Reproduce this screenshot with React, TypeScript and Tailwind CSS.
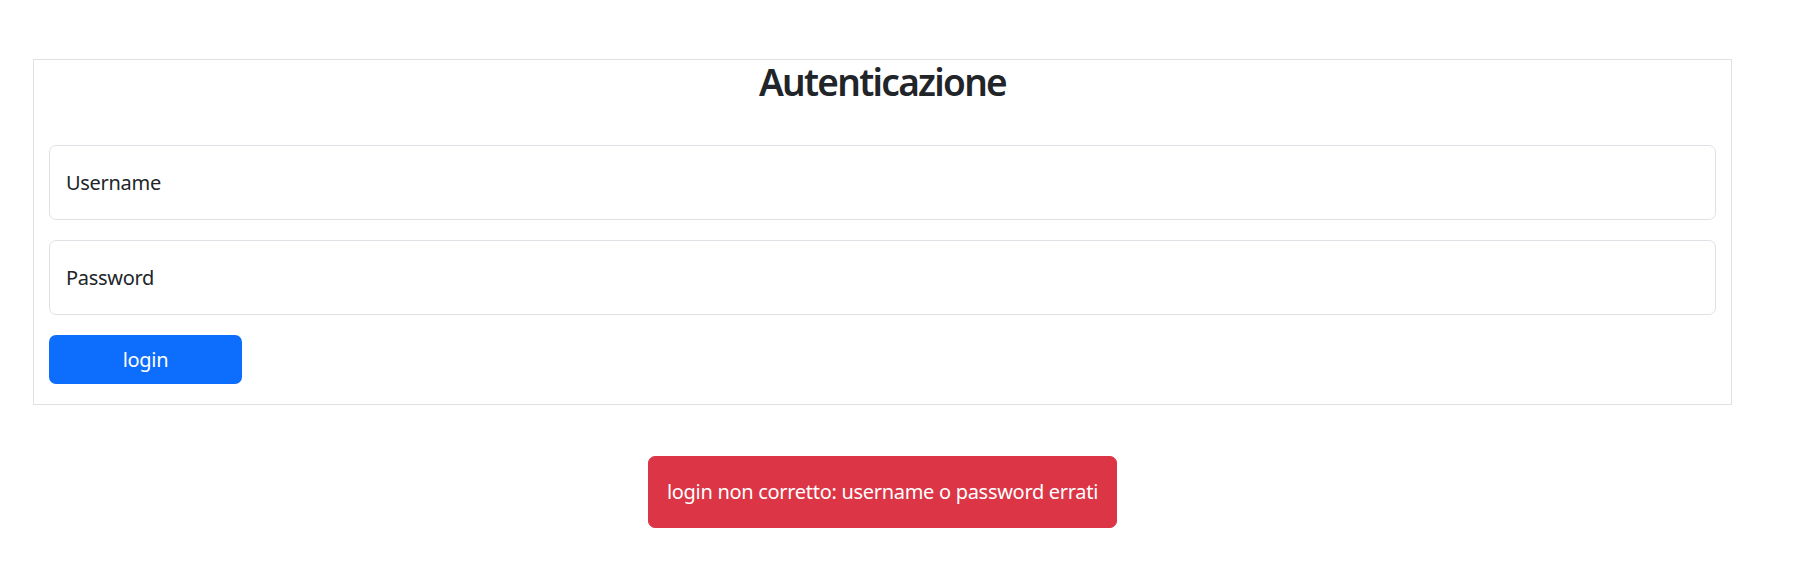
import React from "react";

export default function App() {
  return (
    <div className="min-h-[583px] bg-white pt-[59px] font-['Noto_Sans',sans-serif] text-[20px] tracking-[-0.3px] text-[#212529]">
      <div className="ml-[33px] w-[1699px]">
        {/* Login card */}
        <div className="border border-[#dee2e6] px-[15px] pb-[20px]">
          <h2 className="text-center text-[37px] font-semibold leading-[44px] tracking-[-1.7px]">
            Autenticazione
          </h2>

          <form className="mt-[41px] flex flex-col gap-[20px]">
            <input
              type="text"
              placeholder="Username"
              className="h-[75px] w-full rounded-[7px] border border-[#dee2e6] px-[16px] outline-none placeholder:text-[#212529]"
            />
            <input
              type="password"
              placeholder="Password"
              className="h-[75px] w-full rounded-[7px] border border-[#dee2e6] px-[16px] outline-none placeholder:text-[#212529]"
            />
            <button
              type="button"
              className="h-[49px] w-[193px] rounded-[7px] bg-[#0d6efd] text-white"
            >
              login
            </button>
          </form>
        </div>

        {/* Error alert */}
        <div className="mt-[51px] flex justify-center">
          <div className="flex h-[72px] w-[469px] items-center justify-center rounded-[7px] border border-[#dc3545] bg-[#dc3545] text-white">
            login non corretto: username o password errati
          </div>
        </div>
      </div>
    </div>
  );
}
